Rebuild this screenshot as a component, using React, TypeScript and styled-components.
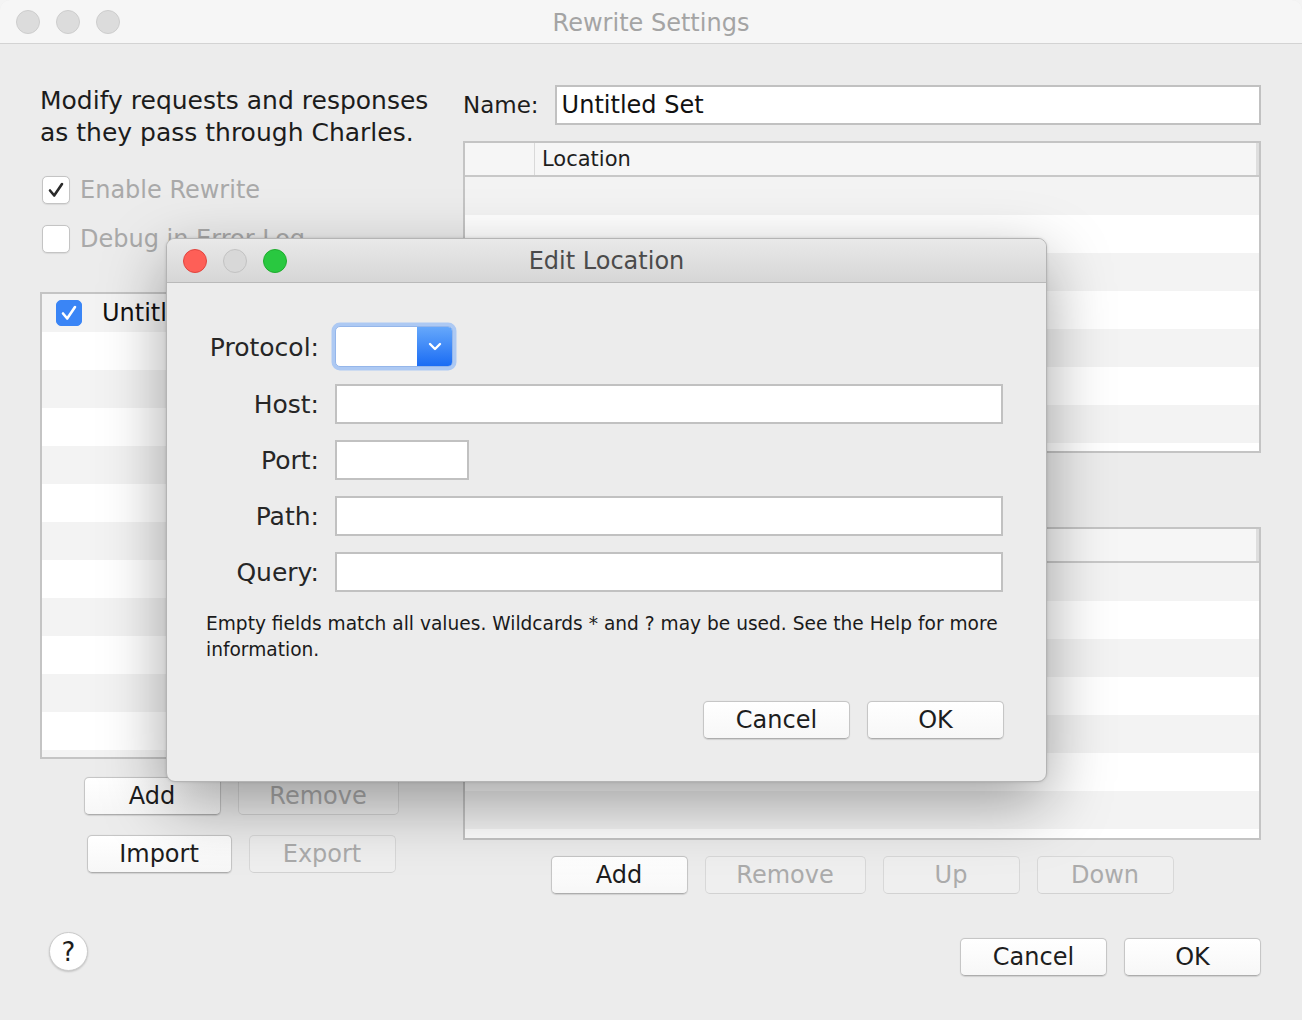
import React from 'react';
import styled, { createGlobalStyle } from 'styled-components';

const FONT = `"DejaVu Sans", "Liberation Sans", sans-serif`;

const Global = createGlobalStyle`
  html, body { margin: 0; padding: 0; background: #f4f4f4; }
  body { font-family: ${FONT}; -webkit-font-smoothing: antialiased; }
  * { box-sizing: border-box; }
`;

const Window = styled.div`
  position: relative;
  width: 1302px;
  height: 1020px;
  background: #ececec;
  border-radius: 10px 10px 0 0;
  overflow: hidden;
  display: flex;
  flex-direction: column;
`;

const TitleBar = styled.div<{ $dialog?: boolean }>`
  flex: none;
  height: 44px;
  display: grid;
  grid-template-columns: 1fr auto 1fr;
  align-items: center;
  padding: 0 16px;
  background: ${p => (p.$dialog ? 'linear-gradient(#e9e9e9, #d6d6d6)' : '#f6f6f6')};
  border-bottom: 1px solid ${p => (p.$dialog ? '#b9b9b9' : '#d3d3d3')};
`;

const Lights = styled.div`
  display: flex;
  gap: 16px;
`;

const Light = styled.span<{ $fill: string; $edge: string }>`
  width: 24px;
  height: 24px;
  border-radius: 50%;
  background: ${p => p.$fill};
  border: 1px solid ${p => p.$edge};
`;

const Title = styled.div<{ $dialog?: boolean }>`
  font-size: ${p => (p.$dialog ? 24 : 24)}px;
  padding-top: ${p => (p.$dialog ? 0 : 3)}px;
  color: ${p => (p.$dialog ? '#4b4b4b' : '#a4a4a4')};
  white-space: nowrap;
`;

const Body = styled.div`
  flex: 1;
  display: flex;
  flex-direction: column;
  padding: 41px 41px 0 40px;
`;

const Columns = styled.div`
  display: grid;
  grid-template-columns: 402px 798px;
  column-gap: 21px;
  align-items: start;
`;

const Column = styled.div`
  display: flex;
  flex-direction: column;
`;

const Description = styled.p`
  margin: 0;
  font-size: 25px;
  line-height: 32px;
  color: #1c1c1c;
`;

const CheckRow = styled.label<{ $top: number }>`
  display: flex;
  align-items: center;
  gap: 10px;
  height: 28px;
  margin-top: ${p => p.$top}px;
  margin-left: 2px;
  font-size: 24px;
  color: #a9a9a9;
`;

const Box = styled.span<{ $blue?: boolean; $size: number }>`
  flex: none;
  width: ${p => p.$size}px;
  height: ${p => p.$size}px;
  border-radius: 5px;
  display: flex;
  align-items: center;
  justify-content: center;
  background: ${p => (p.$blue ? '#3a85f6' : '#ffffff')};
  border: 1px solid ${p => (p.$blue ? '#3a85f6' : '#c4c4c4')};
  box-shadow: ${p => (p.$blue ? 'none' : '0 0.5px 1px rgba(0,0,0,0.08)')};
`;

const ListBox = styled.div<{ $h: number; $top: number }>`
  height: ${p => p.$h}px;
  margin-top: ${p => p.$top}px;
  border: 2px solid #c4c4c4;
  background: #ffffff;
  overflow: hidden;
  display: flex;
  flex-direction: column;
`;

const Row = styled.div<{ $odd: boolean }>`
  flex: none;
  height: 38px;
  display: flex;
  align-items: center;
  gap: 20px;
  padding-left: 14px;
  background: ${p => (p.$odd ? '#ffffff' : '#f3f3f3')};
  font-size: 24px;
  color: #111;
`;

const Header = styled.div`
  flex: none;
  height: 34px;
  display: flex;
  align-items: center;
  background: #f6f6f6;
  border-bottom: 2px solid #c8c8c8;
  font-size: 21px;
  color: #1e1e1e;
`;

const HeadCell = styled.div<{ $w?: number }>`
  height: 100%;
  display: flex;
  align-items: center;
  padding-left: 7px;
  ${p => (p.$w ? `width: ${p.$w}px; flex: none;` : 'flex: 1;')}
  border-right: 1px solid #d9d9d9;
  &:last-child { border-right: 3px solid #dedede; }
`;

const ButtonRow = styled.div<{ $top: number; $justify?: string }>`
  display: flex;
  gap: 17px;
  justify-content: ${p => p.$justify || 'center'};
  margin-top: ${p => p.$top}px;
`;

const Button = styled.button<{ $w: number; $disabled?: boolean }>`
  width: ${p => p.$w}px;
  height: 38px;
  padding: 0;
  border-radius: 5px;
  font-family: ${FONT};
  font-size: 24px;
  color: ${p => (p.$disabled ? '#ababab' : '#1d1d1d')};
  background: ${p => (p.$disabled ? '#efefef' : 'linear-gradient(#ffffff, #f7f7f7)')};
  border: 1px solid ${p => (p.$disabled ? '#d8d8d8' : '#c6c6c6')};
  border-bottom-color: ${p => (p.$disabled ? '#d2d2d2' : '#adadad')};
  box-shadow: ${p => (p.$disabled ? 'none' : '0 0.5px 1px rgba(0,0,0,0.12)')};
`;

const NameRow = styled.div`
  display: flex;
  align-items: center;
  gap: 16px;
  font-size: 23px;
  color: #1c1c1c;
`;

const TextField = styled.div<{ $w?: number; $h?: number; $size?: number }>`
  ${p => (p.$w ? `width: ${p.$w}px; flex: none;` : 'flex: 1;')}
  height: ${p => p.$h || 40}px;
  background: #ffffff;
  border: 2px solid #c1c1c1;
  display: flex;
  align-items: center;
  padding-left: 5px;
  font-size: ${p => p.$size || 24}px;
  color: #111;
`;

const Spacer = styled.div<{ $h: number }>`
  height: ${p => p.$h}px;
  flex: none;
`;

const Footer = styled.div`
  margin-top: 38px;
  display: flex;
  justify-content: space-between;
  align-items: flex-end;
`;

const HelpButton = styled.div`
  width: 39px;
  height: 39px;
  margin: 0 0 5px 9px;
  border-radius: 50%;
  background: #ffffff;
  border: 1px solid #cbcbcb;
  box-shadow: 0 1px 2px rgba(0,0,0,0.18);
  display: flex;
  align-items: center;
  justify-content: center;
  font-size: 26px;
  color: #1d1d1d;
`;

/* ---------- dialog ---------- */

const Dialog = styled.div`
  position: absolute;
  left: 166px;
  top: 238px;
  width: 881px;
  height: 544px;
  background: #ececec;
  border: 1px solid #b4b4b4;
  border-radius: 9px;
  overflow: hidden;
  display: flex;
  flex-direction: column;
  box-shadow: 0 22px 64px rgba(0, 0, 0, 0.36), 0 0 3px rgba(0, 0, 0, 0.15);
`;

const DialogBody = styled.div`
  flex: 1;
  display: flex;
  flex-direction: column;
  padding: 43px 42px 0 39px;
`;

const Form = styled.div`
  display: grid;
  grid-template-columns: 113px 668px;
  grid-auto-rows: 40px;
  grid-template-rows: 42px;
  column-gap: 16px;
  row-gap: 16px;
  align-items: center;
`;

const Label = styled.div`
  text-align: right;
  font-size: 25px;
  color: #262626;
  white-space: nowrap;
`;

const FieldCell = styled.div`
  display: flex;
  height: 100%;
`;

const Select = styled.div`
  width: 118px;
  height: 41px;
  display: flex;
  background: #ffffff;
  border: 1px solid #95b6ea;
  border-radius: 5px;
  overflow: hidden;
  box-shadow: 0 0 0 3.5px #adc9f3;
`;

const SelectArrow = styled.div`
  width: 35px;
  margin-left: auto;
  display: flex;
  align-items: center;
  justify-content: center;
  background: linear-gradient(#66a8fb, #1a6cf4);
`;

const HelpText = styled.p`
  margin: 19px 0 0 0;
  width: 810px;
  font-size: 18.6px;
  line-height: 26px;
  color: #1a1a1a;
`;

const Check = ({ color }: { color: string }) => (
  <svg width="18" height="18" viewBox="0 0 18 18">
    <path d="M3 9.5 L7.2 14.5 L15 3" fill="none" stroke={color} strokeWidth="2.6" strokeLinecap="round" strokeLinejoin="round" />
  </svg>
);

const Chevron = () => (
  <svg width="14" height="9" viewBox="0 0 14 9">
    <path d="M2 2 L7 7 L12 2" fill="none" stroke="#ffffff" strokeWidth="2.4" strokeLinecap="round" strokeLinejoin="round" />
  </svg>
);

const rows = (n: number) => Array.from({ length: n }, (_, i) => i);

export default function App() {
  return (
    <>
      <Global />
      <Window>
        <TitleBar>
          <Lights>
            <Light $fill="#dcdcdc" $edge="#cdcdcd" />
            <Light $fill="#dcdcdc" $edge="#cdcdcd" />
            <Light $fill="#dcdcdc" $edge="#cdcdcd" />
          </Lights>
          <Title>Rewrite Settings</Title>
          <div />
        </TitleBar>

        <Body>
          <Columns>
            <Column>
              <Description>
                Modify requests and responses
                <br />
                as they pass through Charles.
              </Description>
              <CheckRow $top={27}>
                <Box $size={28}>
                  <Check color="#2a2a2a" />
                </Box>
                Enable Rewrite
              </CheckRow>
              <CheckRow $top={21}>
                <Box $size={28} />
                Debug in Error Log
              </CheckRow>
              <ListBox $h={467} $top={39}>
                <Row $odd={false}>
                  <Box $blue $size={26}>
                    <Check color="#ffffff" />
                  </Box>
                  Untitled Set
                </Row>
                {rows(12).map(i => (
                  <Row key={i} $odd={i % 2 === 0} />
                ))}
              </ListBox>
              <ButtonRow $top={18}>
                <Button $w={137}>Add</Button>
                <Button $w={161} $disabled>Remove</Button>
              </ButtonRow>
              <ButtonRow $top={20}>
                <Button $w={145}>Import</Button>
                <Button $w={147} $disabled>Export</Button>
              </ButtonRow>
            </Column>

            <Column>
              <NameRow>
                Name:
                <TextField>Untitled Set</TextField>
              </NameRow>
              <ListBox $h={312} $top={16}>
                <Header>
                  <HeadCell $w={70} />
                  <HeadCell>Location</HeadCell>
                </Header>
                {rows(8).map(i => (
                  <Row key={i} $odd={i % 2 === 1} />
                ))}
              </ListBox>
              <Spacer $h={74} />
              <ListBox $h={313} $top={0}>
                <Header>
                  <HeadCell />
                </Header>
                {rows(8).map(i => (
                  <Row key={i} $odd={i % 2 === 1} />
                ))}
              </ListBox>
              <ButtonRow $top={16}>
                <Button $w={137}>Add</Button>
                <Button $w={161} $disabled>Remove</Button>
                <Button $w={137} $disabled>Up</Button>
                <Button $w={137} $disabled>Down</Button>
              </ButtonRow>
            </Column>
          </Columns>

          <Footer>
            <HelpButton>?</HelpButton>
            <ButtonRow $top={0} $justify="flex-end">
              <Button $w={147}>Cancel</Button>
              <Button $w={137}>OK</Button>
            </ButtonRow>
          </Footer>
        </Body>

        <Dialog>
          <TitleBar $dialog>
            <Lights>
              <Light $fill="#fe5f57" $edge="#e0443e" />
              <Light $fill="#d8d8d8" $edge="#c2c2c2" />
              <Light $fill="#29c840" $edge="#1eac2d" />
            </Lights>
            <Title $dialog>Edit Location</Title>
            <div />
          </TitleBar>
          <DialogBody>
            <Form>
              <Label>Protocol:</Label>
              <FieldCell>
                <Select>
                  <SelectArrow>
                    <Chevron />
                  </SelectArrow>
                </Select>
              </FieldCell>
              <Label>Host:</Label>
              <TextField />
              <Label>Port:</Label>
              <FieldCell>
                <TextField $w={134} />
              </FieldCell>
              <Label>Path:</Label>
              <TextField />
              <Label>Query:</Label>
              <TextField />
            </Form>
            <HelpText>
              Empty fields match all values. Wildcards * and ? may be used. See the Help for more information.
            </HelpText>
            <ButtonRow $top={38} $justify="flex-end">
              <Button $w={147}>Cancel</Button>
              <Button $w={137}>OK</Button>
            </ButtonRow>
          </DialogBody>
        </Dialog>
      </Window>
    </>
  );
}
